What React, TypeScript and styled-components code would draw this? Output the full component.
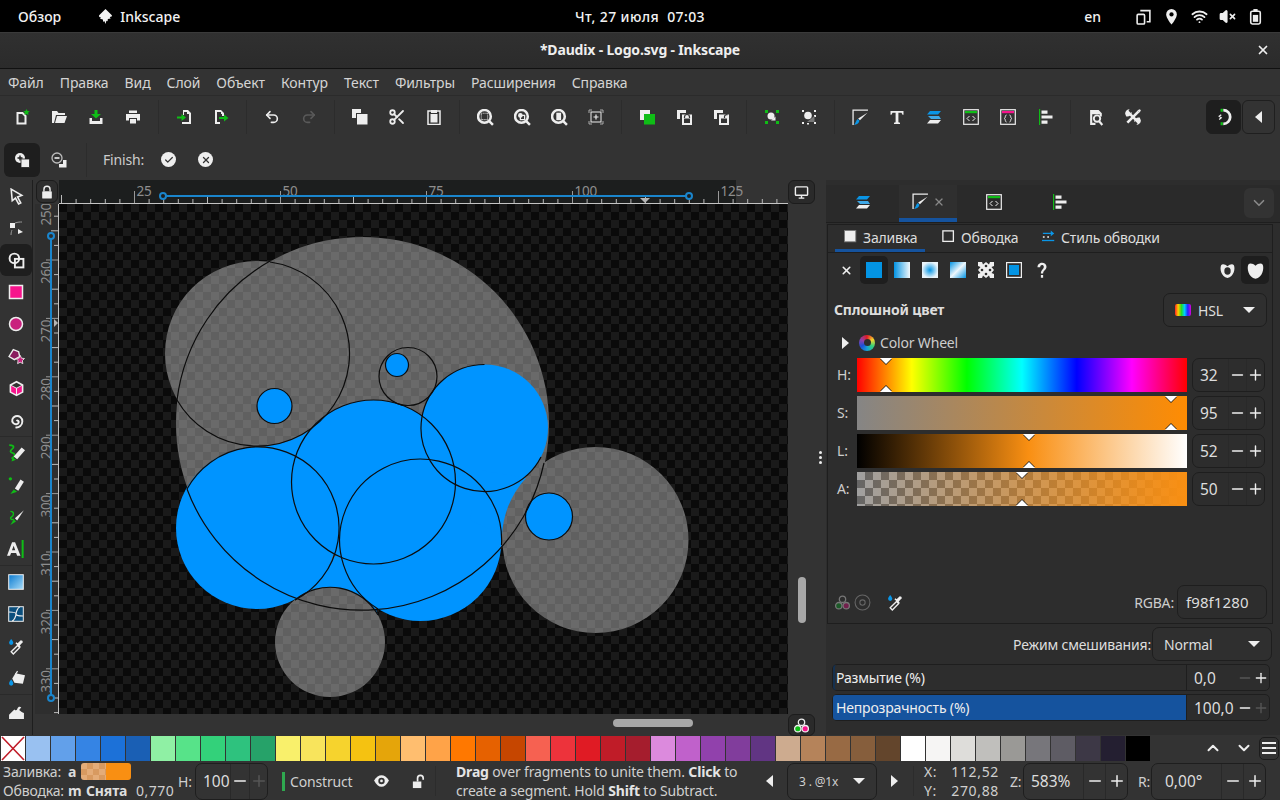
import React from "react";
import styled, { createGlobalStyle } from "styled-components";
import { Minus, Plus, Undo2, Redo2, Scissors, Wifi, VolumeX, ChevronUp, ChevronDown, X, Check } from "lucide-react";

const W = "#eeeeee";
const G = "#0fbd16";
const B = "#0a95e6";
const P = "#f7148c";

const Global = createGlobalStyle`
  html, body { margin: 0; padding: 0; background: #333333; overflow: hidden; }
  body { font-family: "Noto Sans", "Open Sans", sans-serif; font-size: 14px; color: #dddddd; letter-spacing: -0.17px; }
  svg { display: block; }
`;

const Page = styled.div`
  width: 1280px;
  height: 800px;
  display: flex;
  flex-direction: column;
  overflow: hidden;
`;

const TopBar = styled.div`
  height: 32px;
  background: #000;
  display: grid;
  grid-template-columns: 1fr auto 1fr;
  align-items: center;
  color: #f2f2f2;
  font-weight: 500;
  font-size: 14px;
  letter-spacing: 0;
`;
const TopLeft = styled.div`
  display: flex;
  align-items: center;
  padding-left: 18px;
`;
const AppName = styled.div`
  display: flex;
  align-items: center;
  gap: 7px;
  margin-left: 37px;
`;
const Clock = styled.span`
  letter-spacing: 0.4px;
`;
const TopRight = styled.div`
  display: flex;
  align-items: center;
  justify-content: flex-end;
  padding-right: 16px;
  gap: 11px;
`;
const Lang = styled.span`
  margin-right: 23px;
`;
const TitleBar = styled.div`
  flex: none;
  padding-bottom: 2px;
  box-sizing: border-box;
  height: 37px;
  background: linear-gradient(#303030, #2b2b2b);
  border-top: 1px solid #3a3a3a;
  border-bottom: 1px solid #111;
  position: relative;
  display: flex;
  align-items: center;
  justify-content: center;
  font-weight: 700;
  font-size: 14px;
  color: #eeeeee;
`;
const CloseBtn = styled.span`
  position: absolute;
  right: 10px;
  top: 10px;
`;
const MenuBar = styled.div`
  height: 27px;
  flex: none;
  display: flex;
  align-items: center;
  gap: 16px;
  padding-left: 8px;
  border-bottom: 1px solid #2b2b2b;
  box-sizing: border-box;
  color: #d4d4d4;
  letter-spacing: -0.1px;
`;
const Toolbar = styled.div`
  height: 43px;
  flex: none;
  box-sizing: border-box;
  padding: 0 0 1px 3.5px;
  display: flex;
  align-items: center;
`;
const Tb = styled.div`
  width: 37px;
  height: 34px;
  display: flex;
  align-items: center;
  justify-content: center;
  flex: none;
`;
const TbSep = styled.div`
  width: 1px;
  height: 34px;
  margin: 0 6.5px;
  background: #2c2c2c;
  flex: none;
`;
const SnapGroup = styled.div`
  margin-left: auto;
  margin-right: 5px;
  display: flex;
  gap: 1px;
`;
const SnapBtn = styled.div<{ $active?: boolean }>`
  width: ${(p) => (p.$active ? "35px" : "33px")};
  height: 34px;
  border-radius: 6px;
  box-sizing: border-box;
  background: ${(p) => (p.$active ? "#1e1e1e" : "#333")};
  border: 1px solid ${(p) => (p.$active ? "#1e1e1e" : "#1f1f1f")};
  display: flex;
  align-items: center;
  justify-content: center;
`;
const ToolControls = styled.div`
  height: 41px;
  flex: none;
  display: flex;
  align-items: center;
  padding-left: 4px;
`;
const ModeBtn = styled.div<{ $active?: boolean }>`
  width: 36px;
  height: 34px;
  border-radius: 6px;
  background: ${(p) => (p.$active ? "#1e1e1e" : "transparent")};
  display: flex;
  align-items: center;
  justify-content: center;
  margin-right: 1px;
`;
const CtlSep = styled.div`
  width: 1px;
  height: 34px;
  background: #2c2c2c;
  margin: 0 16px 0 8px;
`;
const FinishLabel = styled.span`
  color: #cccccc;
  margin-right: 17px;
`;
const RoundIcon = styled.span`
  width: 15px;
  height: 15px;
  border-radius: 50%;
  background: #eeeeee;
  display: flex;
  align-items: center;
  justify-content: center;
  margin-right: 22px;
`;
const Main = styled.div`
  height: 555px;
  flex: none;
  display: flex;
`;
const Toolbox = styled.div`
  width: 33px;
  flex: none;
  box-sizing: border-box;
  border-right: 1px solid #1e1e1e;
  display: flex;
  flex-direction: column;
`;
const ToolBtn = styled.div<{ $active?: boolean }>`
  height: 32px;
  width: 32px;
  flex: none;
  border-radius: 6px;
  background: ${(p) => (p.$active ? "#1e1e1e" : "transparent")};
  display: flex;
  align-items: center;
  justify-content: center;
`;
const ToolSep = styled.div`
  height: 1px;
  flex: none;
  background: #2a2a2a;
`;
const CanvasArea = styled.div`
  width: 793px;
  flex: none;
  display: grid;
  grid-template-columns: 2px 24px 729px 38px;
  grid-template-rows: 24px 510px 21px;
`;
const LockBtn = styled.div`
  margin: 0 1px 1px 1px;
  border: 1px solid #1c1c1c;
  border-radius: 6px;
  display: flex;
  align-items: center;
  justify-content: center;
  background: #2e2e2e;
`;
const CmsBtn = styled.div`
  display: flex;
  align-items: center;
  justify-content: center;
  width: 25px;
  height: 22px;
  border: 1px solid #1c1c1c;
  border-radius: 6px;
  background: #2a2a2a;
`;
const Canvas = styled.div`
  width: 729px;
  height: 510px;
  background: repeating-conic-gradient(#1a1a1a 0 25%, #0a0a0a 0 50%) 0 0 / 16px 16px;
`;
const RightStrip = styled.div`
  display: flex;
`;
const VScrollCol = styled.div`
  width: 27px;
  padding-top: 373px;
  display: flex;
  justify-content: center;
`;
const VThumb = styled.div`
  width: 8px;
  height: 46px;
  border-radius: 4px;
  background: #a8a8a8;
`;
const HandleCol = styled.div`
  width: 11px;
  padding-top: 247px;
  display: flex;
  flex-direction: column;
  align-items: center;
  gap: 2px;
`;
const HandleDot = styled.span`
  width: 3px;
  height: 3px;
  border-radius: 50%;
  background: #eeeeee;
`;
const HScrollCell = styled.div`
  padding: 5px 0 0 554px;
`;
const HThumb = styled.div`
  width: 80px;
  height: 8px;
  border-radius: 4px;
  background: #a8a8a8;
`;
const ColorBtn = styled.div`
  width: 25px;
  height: 20px;
  border: 1px solid #1c1c1c;
  border-radius: 6px;
  background: #2a2a2a;
  display: flex;
  align-items: center;
  justify-content: center;
`;
const Panel = styled.div`
  width: 454px;
  flex: none;
  background: #2d2d2d;
  display: flex;
  flex-direction: column;
  box-sizing: border-box;
`;
const PanelHead = styled.div`
  margin-top: 5px;
  height: 38px;
  flex: none;
  box-sizing: border-box;
  display: flex;
  background: #2a2a2a;
  border-bottom: 1px solid #1e1e1e;
  position: relative;
`;
const PanelTab = styled.div<{ $w: number; $active?: boolean }>`
  width: ${(p) => p.$w}px;
  height: 37px;
  box-sizing: border-box;
  display: flex;
  align-items: center;
  justify-content: center;
  gap: 4px;
  background: ${(p) => (p.$active ? "#2f2f2f" : "transparent")};
  border-bottom: 4px solid ${(p) => (p.$active ? "#15539e" : "transparent")};
`;
const CollapseBtn = styled.div`
  position: absolute;
  right: 6px;
  top: 3px;
  width: 30px;
  height: 30px;
  border-radius: 6px;
  background: #333333;
  display: flex;
  align-items: center;
  justify-content: center;
`;
const Frame = styled.div`
  margin: 1px 7px 0 1px;
  height: 400px;
  flex: none;
  box-sizing: border-box;
  border: 1px solid #1e1e1e;
  display: flex;
  flex-direction: column;
`;
const SubTabs = styled.div`
  height: 28px;
  flex: none;
  box-sizing: border-box;
  border-bottom: 1px solid #1e1e1e;
  display: flex;
  padding-left: 7px;
`;
const SubTab = styled.div<{ $w: number; $active?: boolean }>`
  width: ${(p) => p.$w}px;
  box-sizing: border-box;
  display: flex;
  align-items: center;
  gap: 5px;
  padding-left: ${(p) => (p.$active ? "9px" : "17px")};
  border-bottom: 3px solid ${(p) => (p.$active ? "#15539e" : "transparent")};
  color: #dddddd;
  height: 27px;
`;
const PaintRow = styled.div`
  display: flex;
  margin-top: 3px;
  padding: 0 3px 0 4px;
  height: 28px;
  flex: none;
`;
const PaintBtn = styled.div<{ $active?: boolean }>`
  width: 28px;
  height: 28px;
  border-radius: 5px;
  background: ${(p) => (p.$active ? "#1e1e1e" : "transparent")};
  display: flex;
  align-items: center;
  justify-content: center;
`;
const Push = styled.div`
  margin-left: auto;
`;
const HeadRow = styled.div`
  margin-top: 9px;
  height: 34px;
  flex: none;
  display: flex;
  align-items: center;
  justify-content: space-between;
  padding: 0 5px 0 6px;
  font-weight: 700;
`;
const HeadText = styled.span`
  margin-top: -2px;
`;
const Drop = styled.div<{ $w: number }>`
  width: ${(p) => p.$w}px;
  height: 34px;
  box-sizing: border-box;
  border: 1px solid #1e1e1e;
  border-radius: 7px;
  background: #2f2f2f;
  display: flex;
  align-items: center;
  padding: 0 11px;
  gap: 7px;
  font-weight: 400;
  color: #dddddd;
`;
const Caret = styled.span`
  margin-left: auto;
  width: 0;
  height: 0;
  border-left: 6px solid transparent;
  border-right: 6px solid transparent;
  border-top: 6px solid #eeeeee;
`;
const Rainbow = styled.span`
  width: 16px;
  height: 12px;
  border-radius: 2px;
  background: linear-gradient(to right, #f22, #fc0, #2d2, #0cf, #22f, #d0d);
`;
const WheelRow = styled.div`
  margin-top: 6px;
  height: 19px;
  flex: none;
  display: flex;
  align-items: center;
  padding-left: 14px;
  gap: 5px;
  color: #cccccc;
`;
const WheelTri = styled.span`
  width: 0;
  height: 0;
  border-top: 6px solid transparent;
  border-bottom: 6px solid transparent;
  border-left: 7px solid #eeeeee;
  margin-right: 5px;
`;
const Wheel = styled.span`
  width: 16px;
  height: 16px;
  border-radius: 50%;
  background: conic-gradient(#e01b24, #f6d32d, #33d17a, #16a0d8, #1c4fd8, #9141ac, #e01b24);
  display: flex;
  align-items: center;
  justify-content: center;
  &::after {
    content: "";
    width: 7px;
    height: 7px;
    border-radius: 50%;
    background: #2d2d2d;
  }
`;
const TriRight = styled.span`
  width: 0;
  height: 0;
  border-top: 6px solid transparent;
  border-bottom: 6px solid transparent;
  border-left: 7px solid #eeeeee;
`;
const TriLeft = styled.span`
  width: 0;
  height: 0;
  border-top: 6px solid transparent;
  border-bottom: 6px solid transparent;
  border-right: 7px solid #eeeeee;
`;
const Sliders = styled.div`
  margin-top: 6px;
  display: flex;
  flex-direction: column;
  gap: 4px;
`;
const SliderRow = styled.div`
  display: grid;
  grid-template-columns: 24px 330px 73px;
  column-gap: 5px;
  height: 34px;
  align-items: stretch;
`;
const SliderLabel = styled.span`
  padding-left: 9px;
  line-height: 33px;
  color: #cccccc;
`;
const Bar = styled.div<{ $kind: string }>`
  position: relative;
  overflow: hidden;
  background: ${(p) =>
    p.$kind === "H"
      ? "linear-gradient(to right,#f00,#ff0 16.6%,#0f0 33.3%,#0ff 50%,#00f 66.6%,#f0f 83.3%,#f00)"
      : p.$kind === "S"
      ? "linear-gradient(to right,#858585,#ff8c02)"
      : p.$kind === "L"
      ? "linear-gradient(to right,#000,#f98f12 52%,#fff)"
      : "linear-gradient(to right,rgba(249,143,18,0),#f98f12),repeating-conic-gradient(#666 0 25%,#a0a0a0 0 50%) 0 0/16px 16px"};
`;
const MarkTop = styled.span`
  position: absolute;
  top: 0;
  margin-left: -6px;
  border-left: 6px solid transparent;
  border-right: 6px solid transparent;
  border-top: 6px solid #ffffff;
  filter: drop-shadow(0 1px 0 #222);
`;
const MarkBottom = styled.span`
  position: absolute;
  bottom: 0;
  margin-left: -6px;
  border-left: 6px solid transparent;
  border-right: 6px solid transparent;
  border-bottom: 6px solid #ffffff;
  filter: drop-shadow(0 -1px 0 #222);
`;
const SpinBox = styled.div<{ $w: number; $h?: number }>`
  width: ${(p) => p.$w}px;
  height: ${(p) => p.$h || 34}px;
  box-sizing: border-box;
  border: 1px solid #1e1e1e;
  border-radius: 7px;
  display: flex;
  align-items: stretch;
  flex: none;
  color: #dddddd;
`;
const SpinValue = styled.span<{ $pad: number }>`
  flex: 1;
  padding-left: ${(p) => p.$pad}px;
  font-size: 15.5px;
  letter-spacing: 0;
  display: flex;
  align-items: center;
  white-space: nowrap;
`;
const SpinBtn = styled.span<{ $dim?: boolean; $bw: number }>`
  width: ${(p) => p.$bw}px;
  display: flex;
  align-items: center;
  justify-content: center;
  border-left: 1px solid #292929;
  color: ${(p) => (p.$dim ? "#565656" : "#eeeeee")};
`;
const FrameFoot = styled.div`
  margin-top: auto;
  margin-bottom: 4px;
  height: 34px;
  flex: none;
  display: flex;
  align-items: center;
  padding: 0 5px 0 6px;
  gap: 3px;
`;
const FootDropper = styled.span`
  margin-left: 13px;
`;
const RgbaLabel = styled.span`
  margin-left: auto;
  color: #cccccc;
`;
const RgbaInput = styled.div`
  width: 90px;
  height: 34px;
  box-sizing: border-box;
  border: 1px solid #1e1e1e;
  border-radius: 7px;
  padding-left: 8px;
  line-height: 32px;
  font-size: 15px;
  letter-spacing: 0.1px;
`;
const BlendRow = styled.div`
  margin-top: 3px;
  height: 34px;
  flex: none;
  display: flex;
  justify-content: flex-end;
  align-items: center;
  padding-right: 8px;
  gap: 1px;
`;
const Meter = styled.div`
  margin: 3px 10px 0 6px;
  height: 27px;
  flex: none;
  box-sizing: border-box;
  border: 1px solid #1e1e1e;
  border-radius: 5px;
  display: flex;
`;
const MeterTrack = styled.div<{ $on?: boolean }>`
  width: 354px;
  flex: none;
  box-sizing: border-box;
  background: ${(p) => (p.$on ? "#15539e" : "transparent")};
  border-right: 1px solid #1e1e1e;
  border-left: ${(p) => (p.$on ? "0" : "2px solid #15304f")};
  padding-left: ${(p) => (p.$on ? "3px" : "1px")};
  line-height: 25px;
  color: #eeeeee;
  border-radius: 3px 0 0 3px;
`;
const MeterValue = styled.div`
  flex: 1;
  display: flex;
  align-items: center;
  padding-left: 7px;
`;
const MeterNum = styled.span`
  flex: 1;
  font-size: 15.5px;
  letter-spacing: 0;
`;
const MeterBtn = styled.span<{ $dim?: boolean }>`
  width: 16px;
  display: flex;
  justify-content: center;
  color: ${(p) => (p.$dim ? "#565656" : "#eeeeee")};
`;
const Palette = styled.div`
  height: 27px;
  flex: none;
  display: flex;
  align-items: flex-start;
  padding: 1px 0 0 1px;
  box-sizing: border-box;
`;
const Swatch = styled.div`
  width: 24px;
  height: 25px;
  margin-right: 1px;
  flex: none;
`;
const PalTools = styled.div`
  margin-left: auto;
  display: flex;
  align-items: center;
  height: 24px;
`;
const PalChevron = styled.span`
  width: 31px;
  display: flex;
  justify-content: center;
`;
const PalMenu = styled.div`
  width: 20px;
  height: 23px;
  box-sizing: border-box;
  margin: 0 1px 0 0;
  border: 1px solid #1c1c1c;
  border-radius: 5px;
  display: flex;
  flex-direction: column;
  justify-content: center;
  gap: 3px;
  padding: 0 2px;
`;
const PalLine = styled.span`
  height: 2px;
  background: #eeeeee;
`;
const Status = styled.div`
  height: 38px;
  flex: none;
  display: flex;
  align-items: center;
  color: #cfcfcf;
`;
const StyleInfo = styled.div`
  width: 178px;
  flex: none;
  display: flex;
  flex-direction: column;
  padding-left: 3px;
  box-sizing: border-box;
`;
const StyleRow = styled.div`
  display: flex;
  align-items: center;
  height: 19px;
  white-space: nowrap;
`;
const StyleName = styled.span`
  width: 65px;
  flex: none;
`;
const StyleLetter = styled.b<{ $w: number }>`
  width: ${(p) => p.$w}px;
  flex: none;
  color: #dddddd;
`;
const FillChip = styled.span`
  width: 50px;
  height: 17px;
  border-radius: 3px;
  background: linear-gradient(to right, transparent 50%, #f98f12 50%),
    repeating-conic-gradient(#d89a60 0 25%, #e4ac78 0 50%) 0 0 / 12px 12px;
`;
const StrokeNone = styled.b`
  width: 50px;
  flex: none;
  color: #dddddd;
`;
const StrokeWidth = styled.span`
  letter-spacing: 0.5px;
`;
const StatLabel = styled.span<{ $w: number }>`
  width: ${(p) => p.$w}px;
  flex: none;
`;
const LayerMark = styled.span`
  width: 3px;
  height: 19px;
  background: #2fa84f;
  margin: 0 5px 0 14px;
  flex: none;
`;
const LayerName = styled.span`
  width: 78px;
  flex: none;
`;
const StatIcon = styled.span<{ $w: number }>`
  width: ${(p) => p.$w}px;
  flex: none;
  display: flex;
  justify-content: center;
`;
const StatSep = styled.span<{ $m: string }>`
  width: 1px;
  height: 30px;
  background: #2c2c2c;
  margin: ${(p) => p.$m};
  flex: none;
`;
const Message = styled.div`
  width: 310px;
  flex: none;
  line-height: 19px;
  font-size: 14px;
  color: #cfcfcf;
  b {
    color: #e4e4e4;
  }
`;
const PageNav = styled.div`
  display: flex;
  align-items: center;
  flex: none;
  gap: 14px;
`;
const PageDrop = styled.div`
  width: 90px;
  height: 37px;
  box-sizing: border-box;
  border: 1px solid #1e1e1e;
  border-radius: 7px;
  display: flex;
  align-items: center;
  padding: 0 11px;
  font-size: 12px;
`;
const Coords = styled.div`
  width: 86px;
  flex: none;
  display: grid;
  grid-template-columns: 26px 49px;
  line-height: 19px;
  text-align: right;
  letter-spacing: 0.65px;
`;
const CoordKey = styled.span`
  text-align: left;
`;

function I({ s = 16, children }: { s?: number; children?: React.ReactNode }) {
  return (
    <svg width={s} height={s} viewBox="0 0 16 16">
      {children}
    </svg>
  );
}

const Mag = ({ children }: { children?: React.ReactNode }) => (
  <I s={17}>
    <circle cx="7" cy="7" r="6" fill="none" stroke={W} strokeWidth="2.4" />
    <path d="M11 11l4 4" stroke={W} strokeWidth="2.4" />
    {children}
  </I>
);

const BackSq = () => <path d="M1 1h9v3H4v6H1z" fill={W} />;
const Front = () => <rect x="6" y="5.5" width="10" height="10.5" fill={W} />;

const LayersIcon = () => (
  <I>
    <path d="M4 2h11l-3 3.500H1z" fill={B} />
    <path d="M2 7h11l2 3H5z" fill="#3fa9e8" />
    <path d="M4 11h11l-3 3.500H1z" fill={W} />
  </I>
);
const FillStrokeIcon = () => (
  <I s={17}>
    <path d="M1 15V1h14" fill="none" stroke={W} strokeWidth="1.2" />
    <path d="M14.5 3.5L7.5 10.5 5.8 9z" fill={W} />
    <path d="M5.5 9.5L7 11c-.5 2.500-2.500 3.500-5 4 1.500-1.500 1.500-4 3.500-5.500z" fill={B} />
  </I>
);
const XmlIcon = () => (
  <I>
    <rect x=".7" y=".7" width="14.6" height="14.6" fill="none" stroke={W} strokeWidth="1.2" />
    <rect x="2" y="2" width="12" height="2.2" fill={G} />
    <path d="M6.5 7L4 9.500 6.500 12M9.500 7L12 9.500 9.500 12" fill="none" stroke={W} strokeWidth="1" />
  </I>
);
const AlignIcon = () => (
  <I>
    <rect x="2" y="0" width="1.2" height="16" fill={G} />
    <path d="M4.500 1.500h6v3.300h-6zM4.500 6.500h11v3h-11zM4.500 11.500h6v3.300h-6z" fill={W} />
  </I>
);
const TrioIcon = ({ a, b, line }: { a: string; b: string; line: string }) => (
  <I s={17}>
    <circle cx="8" cy="5" r="3" fill="none" stroke={line} strokeWidth="1.2" />
    <circle cx="4.500" cy="11" r="3" fill={a} stroke={line} strokeWidth="1.2" />
    <circle cx="11.500" cy="11" r="3" fill={b} stroke={line} strokeWidth="1.2" />
  </I>
);
const DropperIcon = () => (
  <I s={17}>
    <path d="M3 1c1 1.500 2 2.500 2 3.500a2 2 0 0 1-4 0C1 3.500 2 2.500 3 1z" fill={B} />
    <path d="M5 15l-2-2 6-6 2 2z" fill="none" stroke={W} strokeWidth="1.3" />
    <path d="M9 5l2-2 1-1a2 2 0 0 1 2 2l-1 1-2 2 1 1-1 1-4-4 1-1z" fill={W} />
  </I>
);

const toolbarGroups: React.ReactNode[][] = [
  [
    <I key="n">
      <path d="M3.500 4h5l3 3v7.500h-8z" fill="none" stroke={W} strokeWidth="2" />
      <path d="M12.500 0l1 2 2.200.3-1.600 1.500.4 2.200-2-1-2 1 .4-2.200L9.300 2.300 11.500 2z" fill={G} />
    </I>,
    <I key="o">
      <path d="M1 2h5l1.500 2H14v2H5L3 14H1z" fill={W} />
      <path d="M6 7h10l-2.500 7H4z" fill={W} />
    </I>,
    <I key="s">
      <path d="M1.500 9H4v3h8V9h2.500v6h-13z" fill={W} />
      <path d="M6.500 1h3v4H13l-5 4.500L3 5h3.500z" fill={G} />
    </I>,
    <I key="p">
      <path d="M4 1.500h8V4H4zM1 5h14v6.500h-3V9H4v2.500H1zM5 10h6v4.500H5z" fill={W} />
    </I>,
  ],
  [
    <I key="im">
      <path d="M7 1h5l3 3v11H6v-2h7V5h-2V3H8v3H7z" fill={W} />
      <path d="M1 7.500h4.500V5L10 8.500 5.500 12V9.500H1z" fill={G} />
    </I>,
    <I key="ex">
      <path d="M2 1h6l3 3v3H9V5H8V3H4v10h3v2H2z" fill={W} />
      <path d="M6 8h5V5.500l4.500 3.500L11 12.500V10H6z" fill={G} />
    </I>,
  ],
  [
    <Undo2 key="u" size={16} color={W} strokeWidth={2.4} />,
    <Redo2 key="r" size={16} color="#5a5a5a" strokeWidth={2.4} />,
  ],
  [
    <I key="c">
      <rect x="0" y="0" width="9" height="9" fill={W} />
      <rect x="4.500" y="4.500" width="11.500" height="11.500" fill={W} stroke="#333" strokeWidth="1" />
    </I>,
    <Scissors key="sc" size={18} color={W} strokeWidth={2.4} />,
    <I key="pa">
      <rect x="2" y="2" width="12" height="13.500" fill="none" stroke={W} strokeWidth="1.5" />
      <rect x="5" y="1" width="6" height="3" fill={W} />
      <rect x="4.500" y="5" width="7" height="8.500" fill={W} />
    </I>,
  ],
  [
    <Mag key="z1">
      <rect x="4" y="4" width="6" height="6" fill="none" stroke={W} strokeWidth="1" strokeDasharray="1 1" />
    </Mag>,
    <Mag key="z2">
      <circle cx="6" cy="6" r="2.2" fill={W} />
      <rect x="6" y="6" width="4" height="4" fill="none" stroke={W} strokeWidth="1.2" />
    </Mag>,
    <Mag key="z3">
      <rect x="5" y="3.500" width="4.500" height="7" fill={W} />
    </Mag>,
    <I key="z4">
      <path d="M1 4V1h3M12 1h3v3M15 12v3h-3M4 15H1v-3" fill="none" stroke="#aaa" strokeWidth="1" />
      <rect x="3" y="3" width="10" height="10" fill="none" stroke={W} strokeWidth="1" />
      <path d="M8 5.500v5M5.500 8h5" stroke={W} strokeWidth="1.2" />
    </I>,
  ],
  [
    <I key="ra">
      <rect x="1" y="1" width="10" height="10" fill={W} />
      <rect x="5" y="5" width="11" height="10.500" fill={G} />
    </I>,
    <I key="lk">
      <BackSq />
      <Front />
      <path d="M8.500 9V8a2.500 2.500 0 0 1 5 0v1" fill="none" stroke="#333" strokeWidth="1.2" />
      <rect x="8" y="9.500" width="6" height="4.500" fill="#333" />
    </I>,
    <I key="ul">
      <BackSq />
      <Front />
      <path d="M11.500 9V7.500a2 2 0 0 1 3-1.500" fill="none" stroke="#333" strokeWidth="1.2" />
      <rect x="8" y="9.500" width="6" height="4.500" fill="#333" />
    </I>,
  ],
  [
    <I key="gr">
      <path d="M1 1h3v3H1zM12 1h3v3h-3zM1 12h3v3H1zM12 12h3v3h-3z" fill={G} />
      <circle cx="7" cy="7" r="3.500" fill={W} />
      <path d="M7 11.500h4.500V7.500z" fill={W} />
    </I>,
    <I key="ug">
      <path d="M1 1h2v2H1zM13 1h2v2h-2zM1 13h2v2H1zM13 13h2v2h-2zM6 14h2v1.500H6zM13 6h2v2h-2z" fill={W} />
      <circle cx="7" cy="6.500" r="3.800" fill={W} />
      <path d="M6 13h7.500V7z" fill="#777" />
    </I>,
  ],
  [
    <FillStrokeIcon key="fs" />,
    <I key="t">
      <path d="M1.500 2h13v3.800h-1L12.500 3.800H9.400v9.500l1.600.4V15H5v-1.300l1.600-.4V3.800H3.500l-1 2h-1z" fill={W} />
    </I>,
    <LayersIcon key="ly" />,
    <XmlIcon key="x" />,
    <I key="cs">
      <rect x=".7" y=".7" width="14.6" height="14.6" fill="none" stroke={W} strokeWidth="1.2" />
      <rect x="2" y="2" width="12" height="2.2" fill={P} />
      <path d="M6.500 6C5 6 5.500 9 4.500 9.500 5.500 10 5 13 6.500 13M9.500 6C11 6 10.500 9 11.500 9.500 10.500 10 11 13 9.500 13" fill="none" stroke={W} strokeWidth="1" />
    </I>,
    <AlignIcon key="al" />,
  ],
  [
    <I key="dp" s={17}>
      <path d="M2 1h8l3 3v3h-2V5H4v8h3v2H2z" fill={W} />
      <circle cx="8.500" cy="9" r="3" fill="none" stroke={W} strokeWidth="1.8" />
      <path d="M10.500 11.500l3 3.500" stroke={W} strokeWidth="2" />
    </I>,
    <I key="pf" s={18}>
      <path d="M3 3l10 10" stroke={W} strokeWidth="2.4" />
      <path d="M13 3L3 13" stroke={W} strokeWidth="2.4" />
      <path d="M1 5a4 4 0 0 1 4-4L3.500 3 5 5 7 3.500a4 4 0 0 1-5 4z" fill={W} />
      <path d="M15 11a4 4 0 0 1-4 4l1.500-2-1.500-2-2 1.500a4 4 0 0 1 5-4z" fill={W} />
      <path d="M12 2l2-1 1 1-1 2z" fill={W} />
    </I>,
  ],
];

const tools: (React.ReactNode | "sep")[] = [
  <I key="1" s={17}>
    <path d="M3 1l10 6-4 1.500 3 5.500-2 1-3-5.500L4 12z" fill="none" stroke={W} strokeWidth="1.5" />
  </I>,
  <I key="2">
    <rect x="2" y="3" width="5" height="5" fill={W} />
    <path d="M3 15c0-3 1-5 1-5M7 3c3-1 5-1 7-1" fill="none" stroke="#999" strokeWidth="1" />
    <path d="M10 9l5 3-5 2z" fill={W} />
  </I>,
  <I key="3" s={17}>
    <circle cx="6" cy="6" r="4.500" fill="none" stroke={W} strokeWidth="1.8" />
    <rect x="6.500" y="6.500" width="8" height="8" fill="none" stroke={W} strokeWidth="1.8" />
  </I>,
  <I key="4">
    <rect x="1.500" y="1.500" width="13" height="13" fill={P} stroke={W} strokeWidth="1.5" />
  </I>,
  <I key="5">
    <circle cx="8" cy="8" r="6.500" fill="#c9207e" stroke={W} strokeWidth="1.5" />
  </I>,
  <I key="6" s={17}>
    <path d="M5 1.500l5 2 1 4.500-5 3-5-3z" fill="#8a1c5e" stroke={W} strokeWidth="1.3" />
    <path d="M11.500 7l1.200 2.600 2.800.3-2 2 .5 2.800-2.500-1.300-2.500 1.300.5-2.800-2-2 2.800-.3z" fill="#c9207e" stroke={W} strokeWidth=".8" />
  </I>,
  <I key="7" s={17}>
    <path d="M8 .8l6.500 3.500v7.500L8 15.300l-6.500-3.500V4.300z" fill={W} />
    <path d="M3 5.500l4.500 2.500v5.500L3 11zM13 5.500L8.500 8v5.500L13 11z" fill={P} />
    <path d="M8 2.500l4.500 2.400L8 7.300 3.500 4.900z" fill="#333" />
  </I>,
  <I key="8" s={17}>
    <path d="M8 8.500c1-1 2.500 0 2 1.500-.6 1.800-3.500 2-5 .5C3 8.500 4 5 7 4c3.500-1 6.500 1.500 6.500 5 0 3.500-3 6-6.500 5.500" fill="none" stroke={W} strokeWidth="1.8" />
  </I>,
  "sep",
  <I key="9" s={18}>
    <path d="M2 1c3 0 5 1 3 3S2 7 5 8s2 3-1 5" fill="none" stroke={G} strokeWidth="1.5" />
    <path d="M6 11l7-8 3 2.500-7 8z" fill={W} />
    <path d="M5 12l3 2-4 1.500z" fill={G} />
  </I>,
  <I key="10" s={18}>
    <circle cx="3" cy="2.500" r="1.500" fill={G} />
    <path d="M7 11l5-8 3 2-5 8z" fill={W} />
    <path d="M6 12l3 2-6 2z" fill={G} />
  </I>,
  <I key="11" s={18}>
    <path d="M3 3c4 0 3 4 1 5s0 3 2 2" fill="none" stroke={G} strokeWidth="1.3" />
    <path d="M7 9l8-7-6 9z" fill={W} />
    <path d="M6 10l2 2-5 3z" fill={G} />
  </I>,
  <I key="12" s={18}>
    <path d="M0 14L4.500 2h2.700L12 14H9l-.9-2.500H3.600L2.700 14zM4.400 9.200h2.900L5.900 5z" fill={W} />
    <rect x="13" y="0" width="1.8" height="16" fill={G} />
  </I>,
  "sep",
  <svg key="13" width="16" height="16" viewBox="0 0 16 16">
    <defs>
      <linearGradient id="gt" x1="0" y1="0" x2="1" y2="1">
        <stop offset="0" stopColor="#0a7ad0" />
        <stop offset="1" stopColor="#a8dcf8" />
      </linearGradient>
    </defs>
    <rect x=".7" y=".7" width="14.6" height="14.6" fill="url(#gt)" stroke={W} strokeWidth="1" />
  </svg>,
  <I key="14">
    <rect x=".7" y=".7" width="14.6" height="14.6" fill="#0b4f7d" stroke={W} strokeWidth="1" />
    <path d="M1 6c4 0 7 0 7 2s-2 7-4 7M15 10c-4 0-7 0-7-2s2-7 4-7" fill="none" stroke={W} strokeWidth="1.2" />
  </I>,
  <DropperIcon key="15" />,
  <I key="16" s={17}>
    <path d="M7 3l9 2-2 8-8-1-2-4z" fill={W} />
    <path d="M9 1L7 4" stroke={W} strokeWidth="1.2" />
    <path d="M3 9c1 1.500 2 2.500 2 3.800a2 2 0 0 1-4 0C1 11.500 2 10.500 3 9z" fill={B} />
  </I>,
  "sep",
  <I key="17" s={17}>
    <path d="M1 11c1-1 3-3 5-5 1.500 1.500 2.500 1 3-1 .5-1.500 2-2 3.500-1l-2 2.500c1 1 3 2.500 4.500 3V15H1z" fill={W} />
  </I>,
];

const palette = "#99c1f1,#62a0ea,#3584e4,#1c71d8,#1a5fb4,#8ff0a4,#57e389,#33d17a,#2ec27e,#26a269,#f9f06b,#f8e45c,#f6d32d,#f5c211,#e5a50a,#ffbe6f,#ffa348,#ff7800,#e66100,#c64600,#f66151,#ed333b,#e01b24,#c01c28,#a51d2d,#dc8add,#c061cb,#9141ac,#813d9c,#613583,#cdab8f,#b5835a,#986a44,#865e3c,#63452c,#ffffff,#f6f5f4,#deddda,#c0bfbc,#9a9996,#77767b,#5e5c64,#3d3846,#241f31,#000000".split(",");

const menuItems = ["Файл", "Правка", "Вид", "Слой", "Объект", "Контур", "Текст", "Фильтры", "Расширения", "Справка"];

const sliders = [
  { k: "H", v: 32, pos: 8.9 },
  { k: "S", v: 95, pos: 95 },
  { k: "L", v: 52, pos: 52 },
  { k: "A", v: 50, pos: 50 },
];

type SpinProps = { w: number; h?: number; bw?: number; pad?: number; value: string; minusDim?: boolean; plusDim?: boolean };

function Spin({ w, h, bw = 17, pad = 7, value, minusDim, plusDim }: SpinProps) {
  return (
    <SpinBox $w={w} $h={h}>
      <SpinValue $pad={pad}>{value}</SpinValue>
      <SpinBtn $dim={minusDim} $bw={bw}>
        <Minus size={18} strokeWidth={2} />
      </SpinBtn>
      <SpinBtn $dim={plusDim} $bw={bw}>
        <Plus size={18} strokeWidth={2} />
      </SpinBtn>
    </SpinBox>
  );
}

function TopRuler() {
  const ticks = [];
  for (let i = -5; i < 50; i++) {
    const x = 134.5 + i * 14.6;
    const h = i % 10 === 0 ? 12 : i % 5 === 0 ? 8 : 4;
    if (x >= 59) ticks.push(<line key={i} x1={x} x2={x} y1={203} y2={203 - h} stroke={i % 10 === 0 ? "#999" : "#bbb"} />);
  }
  const labels = [
    [25, 134.5],
    [50, 280.5],
    [75, 426.5],
    [100, 572.5],
    [125, 718.5],
  ];
  return (
    <svg width="729" height="24" viewBox="59 180 729 24">
      <rect x="59" y="180" width="677" height="24" fill="#1c1e1e" />
      <rect x="736" y="180" width="52" height="24" fill="#333" />
      {ticks}
      <rect x="59" y="203" width="729" height="1" fill="#c4c4c4" />
      {labels.map(([t, x]) => (
        <text key={t} x={x + 2} y="196" fontSize="13.5" fill="#8e8e8e" fontFamily="Noto Sans">
          {t}
        </text>
      ))}
      <line x1="163" x2="689" y1="196" y2="196" stroke="#1a85cc" strokeWidth="2" />
      <circle cx="163" cy="196" r="3" fill="#1c1e1e" stroke="#1a85cc" strokeWidth="2" />
      <circle cx="689" cy="196" r="3" fill="#1c1e1e" stroke="#1a85cc" strokeWidth="2" />
      <path d="M640 198h10l-5 5z" fill="#b5b5b5" />
    </svg>
  );
}

function LeftRuler() {
  const ticks = [];
  for (let i = 0; i < 36; i++) {
    const y = 201.6 + i * 14.6;
    const h = i % 4 === 0 ? 12 : i % 2 === 0 ? 7 : 4;
    ticks.push(<line key={i} y1={y} y2={y} x1={58} x2={58 - h} stroke={i % 4 === 0 ? "#999" : "#bbb"} />);
  }
  const nums = [250, 260, 270, 280, 290, 300, 310, 320, 330];
  return (
    <svg width="24" height="510" viewBox="35 204 24 510">
      <rect x="35" y="204" width="24" height="510" fill="#2e2e2e" />
      {ticks}
      <rect x="58" y="204" width="1" height="510" fill="#c4c4c4" />
      {nums.map((n, i) => {
        const y = 201.6 + i * 58.4 + 24;
        return (
          <text key={n} transform={`translate(50.5 ${y}) rotate(-90)`} fontSize="13.5" fill="#8e8e8e" fontFamily="Noto Sans">
            {n}
          </text>
        );
      })}
      <line x1="51" x2="51" y1="236" y2="698" stroke="#1a85cc" strokeWidth="2" />
      <circle cx="51" cy="236" r="3" fill="#2e2e2e" stroke="#1a85cc" strokeWidth="2" />
      <circle cx="51" cy="698" r="3" fill="#2e2e2e" stroke="#1a85cc" strokeWidth="2" />
      <path d="M54 319v8l4-4z" fill="#b5b5b5" />
    </svg>
  );
}

function Drawing() {
  const blue = "#0094ff";
  const line = { fill: "none", stroke: "#0c0c0c", strokeWidth: 1.2 };
  const ring = { stroke: "#0c0c0c", strokeWidth: 1.2 };
  return (
    <svg width="729" height="510" viewBox="59 204 729 510">
      <defs>
        <pattern id="chk" x="59" y="204" width="16" height="16" patternUnits="userSpaceOnUse">
          <rect width="16" height="16" fill="#606060" />
          <rect width="8" height="8" fill="#6a6a6a" />
          <rect x="8" y="8" width="8" height="8" fill="#6a6a6a" />
        </pattern>
      </defs>
      <circle cx="362.5" cy="423.5" r="186.5" fill="url(#chk)" />
      <circle cx="257.5" cy="353.5" r="92.5" fill="url(#chk)" />
      <circle cx="595.5" cy="540" r="93" fill="url(#chk)" />
      <circle cx="257" cy="528" r="81" fill={blue} />
      <circle cx="373.5" cy="482" r="82" fill={blue} />
      <circle cx="420.5" cy="540" r="81" fill={blue} />
      <circle cx="484.5" cy="428" r="63.5" fill={blue} />
      <path d="M265 446A92.5 92.5 0 0 0 323 419L360 450L300 480Z" fill={blue} />
      <path d="M502 535A93 93 0 0 1 526 478L480 470L470 520Z" fill={blue} />
      <path d="M295 600L350 540L378 615Z" fill={blue} />
      <circle cx="330" cy="642" r="55" fill="url(#chk)" />
      <circle cx="274.5" cy="406" r="17.5" fill={blue} {...ring} />
      <circle cx="397" cy="365" r="11.5" fill={blue} {...ring} />
      <circle cx="549" cy="516.5" r="23.5" fill={blue} {...ring} />
      <circle cx="408" cy="376.5" r="29" {...line} />
      <circle cx="373.5" cy="482" r="82" {...line} />
      <path d="M270 262A92.5 92.5 0 1 1 177 400" {...line} />
      <path d="M177 400A186.5 186.5 0 0 1 270 261" {...line} />
      <path d="M544 463A186.5 186.5 0 0 1 187 489" {...line} />
      <path d="M187 489A81 81 0 1 1 295 600" {...line} />
      <path d="M378 609A81 81 0 1 1 501.5 545" {...line} />
      <path d="M541 457A63.5 63.5 0 1 1 484.5 364.5" {...line} />
      <path d="M295 600A55 55 0 0 1 378 615" {...line} />
    </svg>
  );
}

const heart = "M8 4C6 2 3 1.500 2 3 .5 6 2 14 8 15c6-1 7.500-9 6-12-1-1.500-4-1-6 1z";

export default function App() {
  return (
    <Page>
      <Global />
      <TopBar>
        <TopLeft>
          Обзор
          <AppName>
            <I s={15}>
              <path d="M8 0l6.500 6.500c.8.8.3 1.800-.8 1.800l-1.200.2 1 1.500-3 .7-.3 2.300-1.200-.5L8 16l-1-3-1.500.5-.3-2.300-3-.7 1-1.500-1.200-.2C.9 8.300.700 7.300 1.500 6.500z" fill="#f2f2f2" />
            </I>
            Inkscape
          </AppName>
        </TopLeft>
        <Clock>Чт, 27 июля&nbsp; 07:03</Clock>
        <TopRight>
          <Lang>en</Lang>
          <I s={17}>
            <path d="M5 2.500h9V13h-3" fill="none" stroke={W} strokeWidth="1.5" />
            <rect x="2" y="6" width="7" height="9" rx="1" fill="none" stroke={W} strokeWidth="1.5" />
          </I>
          <I s={17}>
            <path d="M8 1a5 5 0 0 1 5 5c0 3.500-5 9.500-5 9.500S3 9.500 3 6a5 5 0 0 1 5-5z" fill={W} />
            <circle cx="8" cy="6" r="2" fill="#000" />
          </I>
          <Wifi size={17} color={W} strokeWidth={2.6} />
          <VolumeX size={17} color={W} fill={W} strokeWidth={2.2} />
          <I s={17}>
            <rect x="3.500" y="3" width="9" height="12" rx="1.500" fill="none" stroke={W} strokeWidth="1.5" />
            <rect x="6" y="1" width="4" height="2" fill={W} />
            <rect x="5.500" y="6.500" width="5" height="6.500" fill={W} />
          </I>
        </TopRight>
      </TopBar>
      <TitleBar>
        *Daudix - Logo.svg - Inkscape
        <CloseBtn>
          <X size={14} color={W} strokeWidth={3} />
        </CloseBtn>
      </TitleBar>
      <MenuBar>
        {menuItems.map((m) => (
          <span key={m}>{m}</span>
        ))}
      </MenuBar>
      <Toolbar>
        {toolbarGroups.map((group, i) => (
          <React.Fragment key={i}>
            {group.map((icon, j) => (
              <Tb key={j}>{icon}</Tb>
            ))}
            {i < toolbarGroups.length - 1 && <TbSep />}
          </React.Fragment>
        ))}
        <SnapGroup>
          <SnapBtn $active>
            <I s={22}>
              <path d="M7.500 3a5 5 0 0 1 0 10" fill="none" stroke={W} strokeWidth="2" />
              <rect x="5.500" y="2" width="1.700" height="2.200" fill={G} />
              <rect x="5.500" y="11.800" width="1.700" height="2.200" fill={G} />
              <path d="M6 6.300L4.500 7.500 6 8.600 4.500 9.800" fill="none" stroke={W} strokeWidth=".9" />
            </I>
          </SnapBtn>
          <SnapBtn>
            <TriLeft />
          </SnapBtn>
        </SnapGroup>
      </Toolbar>
      <ToolControls>
        <ModeBtn $active>
          <I>
            <circle cx="6" cy="6" r="5" fill={W} />
            <rect x="7" y="7" width="8.500" height="8.500" fill={W} stroke="#1e1e1e" strokeWidth=".8" />
            <path d="M6 3.500v5M3.500 6h5" stroke="#1e1e1e" strokeWidth="1.4" />
          </I>
        </ModeBtn>
        <ModeBtn>
          <I>
            <circle cx="6" cy="6" r="5" fill="none" stroke="#bbb" strokeWidth="1.3" />
            <path d="M3.500 6h5" stroke={W} strokeWidth="1.6" />
            <path d="M8 15.500h7.500V8H12v4H8z" fill={W} />
          </I>
        </ModeBtn>
        <CtlSep />
        <FinishLabel>Finish:</FinishLabel>
        <RoundIcon>
          <Check size={10} color="#333" strokeWidth={3} />
        </RoundIcon>
        <RoundIcon>
          <X size={10} color="#333" strokeWidth={3} />
        </RoundIcon>
      </ToolControls>
      <Main>
        <Toolbox>
          {tools.map((t, i) =>
            t === "sep" ? <ToolSep key={i} /> : <ToolBtn key={i} $active={i === 2}>{t}</ToolBtn>
          )}
        </Toolbox>
        <CanvasArea>
          <div />
          <LockBtn>
            <I s={14}>
              <path d="M4.500 7V5a3.500 3.500 0 0 1 7 0v2" fill="none" stroke={W} strokeWidth="1.6" />
              <rect x="2.500" y="7" width="11" height="8.500" rx="1" fill={W} />
            </I>
          </LockBtn>
          <TopRuler />
          <CmsBtn>
            <I s={15}>
              <rect x="1.500" y="2" width="13" height="9" rx="1" fill="none" stroke={W} strokeWidth="1.5" />
              <path d="M5 14h6M8 11v3" stroke={W} strokeWidth="1.5" />
            </I>
          </CmsBtn>
          <div />
          <LeftRuler />
          <Canvas>
            <Drawing />
          </Canvas>
          <RightStrip>
            <VScrollCol>
              <VThumb />
            </VScrollCol>
            <HandleCol>
              <HandleDot />
              <HandleDot />
              <HandleDot />
            </HandleCol>
          </RightStrip>
          <div />
          <div />
          <HScrollCell>
            <HThumb />
          </HScrollCell>
          <ColorBtn>
            <TrioIcon a={G} b={P} line={W} />
          </ColorBtn>
        </CanvasArea>
        <Panel>
          <PanelHead>
            <PanelTab $w={73}>
              <LayersIcon />
            </PanelTab>
            <PanelTab $w={58} $active>
              <FillStrokeIcon />
              <X size={12} color="#888" strokeWidth={2.6} />
            </PanelTab>
            <PanelTab $w={73}>
              <XmlIcon />
            </PanelTab>
            <PanelTab $w={57}>
              <AlignIcon />
            </PanelTab>
            <CollapseBtn>
              <ChevronDown size={18} color="#8a8a8a" strokeWidth={2.2} />
            </CollapseBtn>
          </PanelHead>
          <Frame>
            <SubTabs>
              <SubTab $w={90} $active>
                <I s={14}>
                  <rect x="0.500" y="0.500" width="13" height="13" fill={W} stroke="#777" />
                </I>
                Заливка
              </SubTab>
              <SubTab $w={100}>
                <I s={14}>
                  <rect x="1" y="1" width="12" height="12" fill="none" stroke={W} strokeWidth="1.5" />
                </I>
                Обводка
              </SubTab>
              <SubTab $w={140}>
                <I s={14}>
                  <path d="M1 4h9V1.500L14 5 10 8V5.500H1z" fill={B} transform="translate(0 -1)" />
                  <path d="M1 8h2M6 8h2" stroke={W} strokeWidth="1.5" />
                  <path d="M0 12h14" stroke={B} strokeWidth="1.5" />
                </I>
                Стиль обводки
              </SubTab>
            </SubTabs>
            <PaintRow>
              <PaintBtn>
                <X size={13} color={W} strokeWidth={3} />
              </PaintBtn>
              <PaintBtn $active>
                <I>
                  <rect width="16" height="16" fill="#0394e4" />
                </I>
              </PaintBtn>
              <PaintBtn>
                <svg width="16" height="16" viewBox="0 0 16 16">
                  <defs>
                    <linearGradient id="pl">
                      <stop offset="0" stopColor="#0394e4" />
                      <stop offset="1" stopColor="#f2f8fc" />
                    </linearGradient>
                    <radialGradient id="pr">
                      <stop offset="0" stopColor="#0394e4" />
                      <stop offset="1" stopColor="#e8f4fb" />
                    </radialGradient>
                    <linearGradient id="pd" x1="1" y1="1" x2="0" y2="0">
                      <stop offset="0" stopColor="#0394e4" />
                      <stop offset="0.5" stopColor="#eef7fc" />
                      <stop offset="1" stopColor="#0394e4" />
                    </linearGradient>
                  </defs>
                  <rect width="16" height="16" fill="url(#pl)" />
                </svg>
              </PaintBtn>
              <PaintBtn>
                <I>
                  <rect width="16" height="16" fill="url(#pr)" />
                </I>
              </PaintBtn>
              <PaintBtn>
                <I>
                  <rect width="16" height="16" fill="url(#pd)" />
                </I>
              </PaintBtn>
              <PaintBtn>
                <I>
                  <path d="M0 0h4l1 2.500L8 0l3 2.500L12 0h4v4l-2.500 1 2.500 3-2.500 3 2.500 1v4h-4l-1-2.500L8 16l-3-2.500L4 16H0v-4l2.500-1L0 8l2.500-3L0 4z" fill={W} />
                  <circle cx="4" cy="8" r="1.3" fill="#2d2d2d" />
                  <circle cx="12" cy="8" r="1.3" fill="#2d2d2d" />
                  <circle cx="8" cy="4" r="1.3" fill="#2d2d2d" />
                  <circle cx="8" cy="12" r="1.3" fill="#2d2d2d" />
                </I>
              </PaintBtn>
              <PaintBtn>
                <I>
                  <rect x=".6" y=".6" width="14.8" height="14.8" fill="none" stroke={W} strokeWidth="1.2" />
                  <rect x="3" y="3" width="10" height="10" fill="#0394e4" />
                </I>
              </PaintBtn>
              <PaintBtn>
                <I s={18}>
                  <path d="M4 5.500C4 3 6 1.500 8 1.500s4 1.400 4 3.600c0 3-3 3-3 6H7c0-3.500 2.600-3.500 2.600-6 0-1-.7-1.500-1.600-1.500s-1.600.6-1.600 2zM7 12.500h2v2.300H7z" fill={W} />
                </I>
              </PaintBtn>
              <Push />
              <PaintBtn>
                <I s={17}>
                  <path d={heart} fill={W} />
                  <ellipse cx="8" cy="8.500" rx="3" ry="3.500" fill="#2d2d2d" />
                </I>
              </PaintBtn>
              <PaintBtn $active>
                <I s={19}>
                  <path d={heart} fill={W} />
                </I>
              </PaintBtn>
            </PaintRow>
            <HeadRow>
              <HeadText>Сплошной цвет</HeadText>
              <Drop $w={104}>
                <Rainbow />
                HSL
                <Caret />
              </Drop>
            </HeadRow>
            <WheelRow>
              <WheelTri />
              <Wheel />
              Color Wheel
            </WheelRow>
            <Sliders>
              {sliders.map((s) => (
                <SliderRow key={s.k}>
                  <SliderLabel>{s.k}:</SliderLabel>
                  <Bar $kind={s.k}>
                    <MarkTop style={{ left: `${s.pos}%` }} />
                    <MarkBottom style={{ left: `${s.pos}%` }} />
                  </Bar>
                  <Spin w={73} value={String(s.v)} />
                </SliderRow>
              ))}
            </Sliders>
            <FrameFoot>
              <TrioIcon a="#1c5a28" b="#72204c" line="#777" />
              <I s={17}>
                <circle cx="8" cy="8" r="7" fill="none" stroke="#666" strokeWidth="1" />
                <circle cx="8" cy="8" r="2.500" fill="none" stroke="#666" strokeWidth="1" />
              </I>
              <FootDropper>
                <DropperIcon />
              </FootDropper>
              <Push />
              <RgbaLabel>RGBA:</RgbaLabel>
              <RgbaInput>f98f1280</RgbaInput>
            </FrameFoot>
          </Frame>
          <BlendRow>
            Режим смешивания:
            <Drop $w={120}>
              Normal
              <Caret />
            </Drop>
          </BlendRow>
          <Meter>
            <MeterTrack>Размытие (%)</MeterTrack>
            <MeterValue>
              <MeterNum>0,0</MeterNum>
              <MeterBtn $dim>
                <Minus size={18} strokeWidth={2} />
              </MeterBtn>
              <MeterBtn>
                <Plus size={18} strokeWidth={2} />
              </MeterBtn>
            </MeterValue>
          </Meter>
          <Meter>
            <MeterTrack $on>Непрозрачность (%)</MeterTrack>
            <MeterValue>
              <MeterNum>100,0</MeterNum>
              <MeterBtn>
                <Minus size={18} strokeWidth={2} />
              </MeterBtn>
              <MeterBtn $dim>
                <Plus size={18} strokeWidth={2} />
              </MeterBtn>
            </MeterValue>
          </Meter>
        </Panel>
      </Main>
      <Palette>
        <Swatch>
          <svg width="24" height="25" viewBox="0 0 24 25">
            <rect width="24" height="25" fill="#fff" />
            <path d="M1 1l22 23M23 1L1 24" stroke="#c01c28" strokeWidth="1.6" />
          </svg>
        </Swatch>
        {palette.map((c) => (
          <Swatch key={c} style={{ background: c }} />
        ))}
        <PalTools>
          <PalChevron>
            <ChevronUp size={18} color={W} strokeWidth={2.6} />
          </PalChevron>
          <PalChevron>
            <ChevronDown size={18} color={W} strokeWidth={2.6} />
          </PalChevron>
          <PalMenu>
            <PalLine />
            <PalLine />
            <PalLine />
          </PalMenu>
        </PalTools>
      </Palette>
      <Status>
        <StyleInfo>
          <StyleRow>
            <StyleName>Заливка:</StyleName>
            <StyleLetter $w={13}>a</StyleLetter>
            <FillChip />
          </StyleRow>
          <StyleRow>
            <StyleName>Обводка:</StyleName>
            <StyleLetter $w={18}>m</StyleLetter>
            <StrokeNone>Снята</StrokeNone>
            <StrokeWidth>0,770</StrokeWidth>
          </StyleRow>
        </StyleInfo>
        <StatLabel $w={17}>H:</StatLabel>
        <Spin w={73} h={37} bw={18} value="100" plusDim />
        <LayerMark />
        <LayerName>Construct</LayerName>
        <StatIcon $w={26}>
          <I s={17}>
            <path d="M1 7c2-3.500 4.500-5 7-5s5 1.500 7 5c-2 4-4.500 6-7 6S3 11 1 7z" fill={W} />
            <circle cx="8" cy="7.500" r="3" fill="#333" />
            <circle cx="8" cy="7.500" r="1.300" fill={W} />
          </I>
        </StatIcon>
        <StatIcon $w={48}>
          <I s={15}>
            <path d="M7 8V4.500a3 3 0 0 1 6 0V6" fill="none" stroke={W} strokeWidth="1.8" />
            <rect x="2" y="8" width="9" height="7" fill={W} />
          </I>
        </StatIcon>
        <StatSep $m="0 20px 0 -7px" />
        <Message>
          <b>Drag</b> over fragments to unite them. <b>Click</b> to
          <br />
          create a segment. Hold <b>Shift</b> to Subtract.
        </Message>
        <PageNav>
          <TriLeft />
          <PageDrop>
            3 . @1x
            <Caret />
          </PageDrop>
          <TriRight />
        </PageNav>
        <StatSep $m="0 10px 0 15px" />
        <Coords>
          <CoordKey>X:</CoordKey>
          <span>112,52</span>
          <CoordKey>Y:</CoordKey>
          <span>270,88</span>
        </Coords>
        <StatLabel $w={13}>Z:</StatLabel>
        <Spin w={105} h={37} bw={21} value="583%" />
        <StatLabel $w={10} />
        <StatLabel $w={13}>R:</StatLabel>
        <Spin w={115} h={37} bw={21} pad={13} value="0,00°" />
      </Status>
    </Page>
  );
}
